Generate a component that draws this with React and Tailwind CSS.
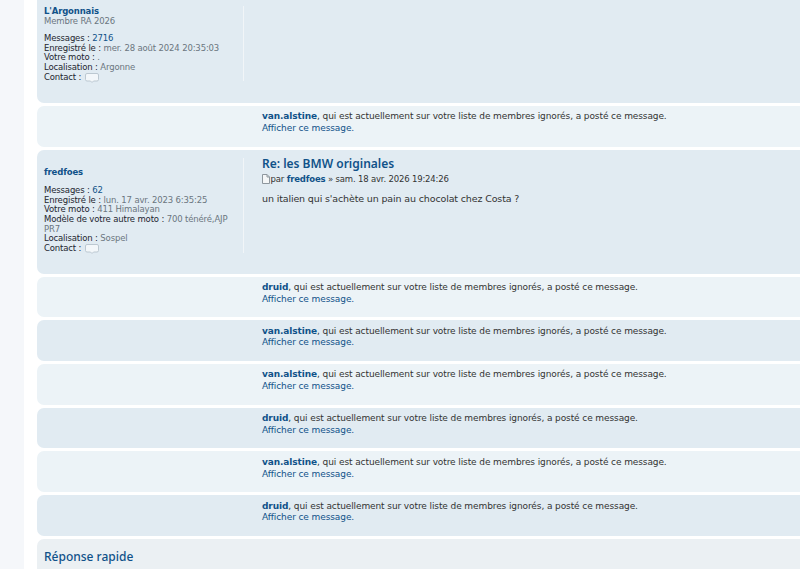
const font = { fontFamily: '"DejaVu Sans", Verdana, sans-serif' };
const title = { fontFamily: '"Noto Sans", sans-serif' };

function Bubble() {
  return (
    <svg width="14" height="10" viewBox="0 0 14 10" className="inline-block align-[-3px] ml-[1px]">
      <path d="M2 .5h10a1.500 1.500 0 0 1 1.500 1.500v4.500a1.500 1.500 0 0 1-1.500 1.500H8.500L7 9.500 5.500 8H2A1.500 1.500 0 0 1 .5 6.500V2A1.500 1.500 0 0 1 2 .5z" fill="#f3f7fa" stroke="#bcc8d1" />
    </svg>
  );
}

function Field({ label, children }) {
  return (
    <div>
      <span className="text-[#1d2630]">{label} : </span>
      <span className="text-[#6b7680]">{children}</span>
    </div>
  );
}

function Ignored({ name, light }) {
  return (
    <div className={`${light ? "bg-[#ecf3f7]" : "bg-[#e1ebf2]"} h-[40.7px] mb-[3px] rounded-l-[7px] pl-[225px] pt-[5.4px] text-[9px] tracking-[-0.1px] leading-[11.7px] text-[#333333]`}>
      <div><b className="text-[#105289]">{name}</b>, qui est actuellement sur votre liste de membres ignorés, a posté ce message.</div>
      <div className="text-[#105289]">Afficher ce message.</div>
    </div>
  );
}

export default function App() {
  return (
    <div className="h-[569px] w-[800px] overflow-hidden bg-[#f5f7fa] flex text-[10px]" style={font}>
      <div className="w-[24px] shrink-0" />
      <div className="flex-1 bg-white pl-[13px] overflow-hidden">
        <div className="h-[103px] mb-[3px] bg-[#e1ebf2] rounded-bl-[7px] flex pt-[6px]">
          <div className="w-[207px] h-[75px] border-r border-[#f1f5f8] pl-[7px] pt-[1px] text-[8.5px] tracking-[-0.15px] leading-[9.6px]">
            <div className="font-bold text-[#105289]">L'Argonnais</div>
            <div className="text-[#6b7680] mt-[0.5px]">Membre RA 2026</div>
            <div className="mt-[7.500px]">
              <div><span className="text-[#1d2630]">Messages : </span><span className="text-[#105289]">2716</span></div>
              <Field label="Enregistré le">mer. 28 août 2024 20:35:03</Field>
              <Field label="Votre moto">.</Field>
              <Field label="Localisation">Argonne</Field>
              <div><span className="text-[#1d2630]">Contact : </span><Bubble /></div>
            </div>
          </div>
        </div>

        <Ignored name="van.alstine" light />

        <div className="h-[124px] mb-[3px] bg-[#e1ebf2] rounded-l-[7px] flex pt-[8px]">
          <div className="w-[207px] h-[95px] border-r border-[#f1f5f8] pl-[7px] pt-[10px] text-[8.5px] tracking-[-0.15px] leading-[9.6px]">
            <div className="font-bold text-[#105289]">fredfoes</div>
            <div className="mt-[9px]">
              <div><span className="text-[#1d2630]">Messages : </span><span className="text-[#105289]">62</span></div>
              <Field label="Enregistré le">lun. 17 avr. 2023 6:35:25</Field>
              <Field label="Votre moto">411 Himalayan</Field>
              <Field label="Modèle de votre autre moto">700 ténéré,AJP PR7</Field>
              <Field label="Localisation">Sospel</Field>
              <div><span className="text-[#1d2630]">Contact : </span><Bubble /></div>
            </div>
          </div>
          <div className="pl-[18px]">
            <div className="text-[12px] leading-[13px] -mt-[1px] font-semibold text-[#105289]" style={title}>Re: les BMW originales</div>
            <div className="mt-[3px] flex items-center text-[8.5px] tracking-[-0.17px] leading-[12px] text-[#333333]">
              <svg width="8" height="10" viewBox="0 0 8 10" className="mr-[0.5px] shrink-0">
                <path d="M.5.5h4.500l2.500 2.500v6.500H.5z" fill="#f4f6f7" stroke="#8e979e" />
                <path d="M5 .5v2.500h2.500" fill="none" stroke="#8e979e" />
              </svg>
              <span>par <b className="text-[#105289]">fredfoes</b> » sam. 18 avr. 2026 19:24:26</span>
            </div>
            <div className="mt-[7px] text-[9.5px] tracking-[-0.14px] leading-[13px] text-[#333333]">un italien qui s'achète un pain au chocolat chez Costa ?</div>
          </div>
        </div>

        <Ignored name="druid" light />
        <Ignored name="van.alstine" />
        <Ignored name="van.alstine" light />
        <Ignored name="druid" />
        <Ignored name="van.alstine" light />
        <Ignored name="druid" />

        <div className="h-[40px] bg-[#ebf0f3] rounded-tl-[7px] pl-[7px] pt-[10px]">
          <div className="text-[12px] leading-[16px] text-[#105289] font-medium" style={title}>Réponse rapide</div>
        </div>
      </div>
    </div>
  );
}
